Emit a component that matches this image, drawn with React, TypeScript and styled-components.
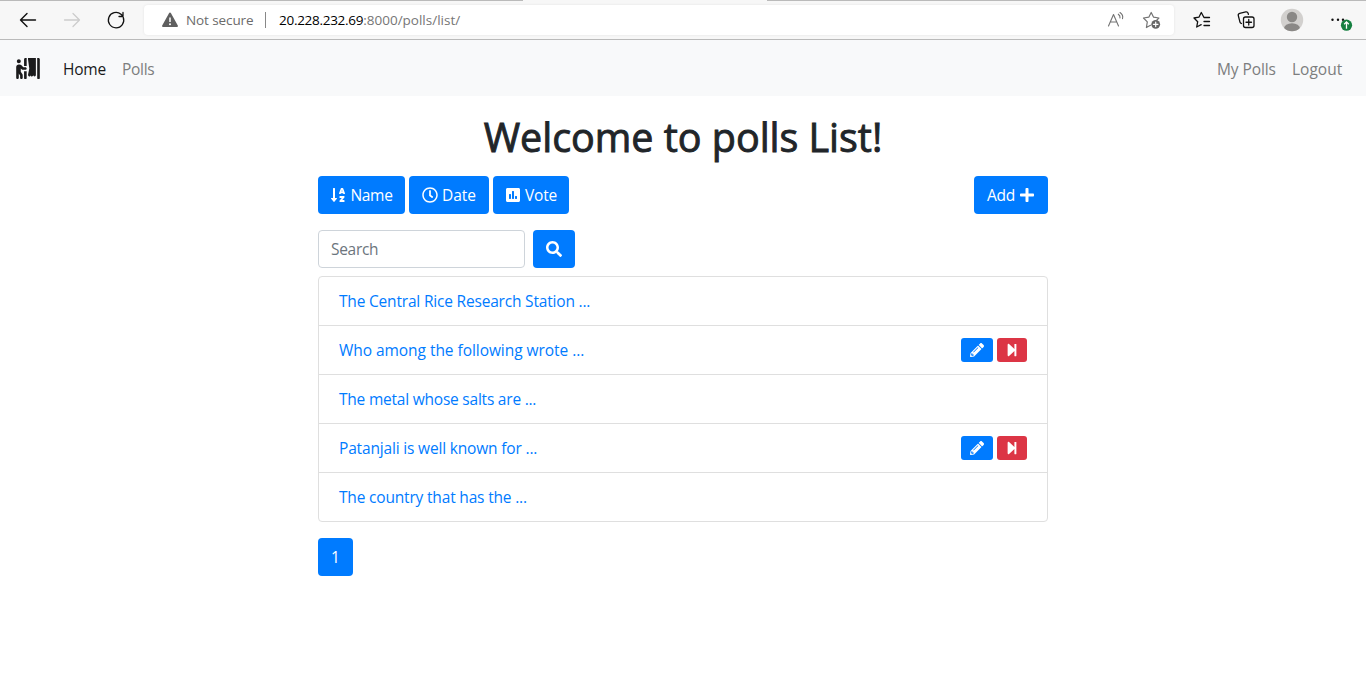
import React from "react";
import styled, { createGlobalStyle } from "styled-components";
import {
  FaPersonBooth,
  FaSortAlphaDown,
  FaRegClock,
  FaPoll,
  FaPlus,
  FaSearch,
  FaPencilAlt,
  FaStepForward,
} from "react-icons/fa";

const Global = createGlobalStyle`
  *, *::before, *::after { box-sizing: border-box; }
  body {
    margin: 0;
    background: #fff;
    color: #212529;
    font: 400 15.5px/24px "Open Sans", "Noto Sans", sans-serif;
    overflow: hidden;
  }
  svg { display: block; flex: none; }
`;

const Page = styled.div`
  display: flex;
  flex-direction: column;
  height: 690px;
`;

const BrowserBar = styled.header`
  display: flex;
  align-items: center;
  height: 40px;
  padding-top: 1px;
  background:
    linear-gradient(to right, #bababa 523px, transparent 523px, transparent 767px, #bababa 767px) top / 100% 1px no-repeat,
    #f7f7f7;
  border-bottom: 1px solid #bababa;
`;

const NavIcons = styled.div`
  display: flex;
  gap: 20px;
  width: 144px;
  padding-left: 16px;
`;

const AddressBar = styled.div`
  display: flex;
  align-items: center;
  width: 1030px;
  height: 30px;
  padding: 0 10px 0 18px;
  background: #fff;
  border-radius: 4px;
  box-shadow: 0 0 3px rgba(0, 0, 0, 0.08);
  font-size: 13.5px;
  line-height: 20px;
  color: #6b6b6b;
`;

const Security = styled.span`
  width: 79px;
  margin-left: 8px;
  letter-spacing: -0.1px;
  white-space: nowrap;
  flex: none;
`;

const Divider = styled.span`
  width: 1px;
  height: 16px;
  background: #888;
`;

const Url = styled.span`
  flex: 1;
  margin-left: 13px;
  color: #767676;
  white-space: nowrap;
`;

const Host = styled.b`
  font-weight: 400;
  letter-spacing: -0.28px;
  color: #000;
`;

const AddressActions = styled.div`
  display: flex;
  gap: 12px;
`;

const BrowserActions = styled.div`
  display: flex;
  align-items: center;
  gap: 21px;
  padding-left: 16px;
`;

const Navbar = styled.nav`
  display: flex;
  align-items: center;
  height: 56px;
  padding: 1px 24px 0 16px;
  background: #f8f9fa;
  color: #1b1b1c;
`;

const Brand = styled.a`
  margin-right: 23px;
  & svg {
    width: 24px;
    height: 21px;
  }
`;

const NavLink = styled.a<{ $active?: boolean; $width: number; $spacing?: number }>`
  width: ${(p) => p.$width}px;
  margin-right: 16px;
  color: ${(p) => (p.$active ? "#191a1a" : "#7d7e7e")};
  letter-spacing: ${(p) => p.$spacing ?? 0}px;
  white-space: nowrap;
  &:last-child { margin-right: 0; }
`;

const Spacer = styled.div`
  flex: 1;
`;

const Container = styled.main`
  width: 730px;
  margin: 17px auto 0;
`;

const Title = styled.h1`
  margin: 0 0 15px;
  font-size: 39.5px;
  font-weight: 400;
  line-height: 48px;
  letter-spacing: -0.03px;
  -webkit-text-stroke: 0.9px #212529;
  text-align: center;
  white-space: nowrap;
`;

const Toolbar = styled.div`
  display: flex;
  gap: 4px;
  margin-bottom: 16px;
`;

const Button = styled.button<{ $width: number; $spacing?: number }>`
  display: flex;
  align-items: center;
  justify-content: center;
  gap: 4px;
  width: ${(p) => p.$width}px;
  height: 38px;
  padding: 0;
  border: 0;
  border-radius: 4px;
  background: #007bff;
  color: #fff;
  font: inherit;
  letter-spacing: ${(p) => p.$spacing ?? 0}px;
  white-space: nowrap;
`;

const SearchRow = styled.form`
  display: flex;
  gap: 8px;
  margin-bottom: 8px;
`;

const SearchInput = styled.input`
  width: 207px;
  height: 38px;
  padding: 0 12px;
  border: 1px solid #ced4da;
  border-radius: 4px;
  font: inherit;
  letter-spacing: -0.3px;
  &::placeholder { color: #6c757d; opacity: 1; }
`;

const PollList = styled.ul`
  margin: 0 0 16px;
  padding: 0;
  list-style: none;
  border: 1px solid #dfdfdf;
  border-radius: 4px;
`;

const PollRow = styled.li`
  display: flex;
  align-items: center;
  gap: 4px;
  height: 49px;
  padding: 0 20px;
  &:not(:last-child) { border-bottom: 1px solid #dfdfdf; }
  &:last-child { height: 48px; }
`;

const PollLink = styled.a<{ $spacing: number }>`
  flex: 1;
  color: #007bff;
  letter-spacing: ${(p) => p.$spacing}px;
`;

const SmallButton = styled.button<{ $danger?: boolean }>`
  display: flex;
  align-items: center;
  justify-content: center;
  width: ${(p) => (p.$danger ? 30 : 32)}px;
  height: 24px;
  padding: 0;
  border: 0;
  border-radius: 3px;
  background: ${(p) => (p.$danger ? "#dc3545" : "#007bff")};
  color: #fff;
  font-size: 14px;
`;

const polls = [
  { text: "The Central Rice Research Station ...", spacing: -0.19 },
  { text: "Who among the following wrote ...", spacing: -0.05, own: true },
  { text: "The metal whose salts are ...", spacing: -0.22 },
  { text: "Patanjali is well known for ...", spacing: -0.17, own: true },
  { text: "The country that has the ...", spacing: -0.18 },
];

const line = { fill: "none", stroke: "currentColor", strokeLinecap: "round", strokeLinejoin: "round" } as const;

const BackIcon = () => (
  <svg width="24" height="24" viewBox="0 0 24 24" {...line} stroke="#111" strokeWidth="1.4">
    <path d="M19.5 12H4.5M11 5.5L4.5 12l6.5 6.5" />
  </svg>
);

const ForwardIcon = () => (
  <svg width="24" height="24" viewBox="0 0 24 24" {...line} stroke="#cdcdcd" strokeWidth="1.3">
    <path d="M4.5 12h15M13 5.5l6.5 6.5-6.5 6.5" />
  </svg>
);

const ReloadIcon = () => (
  <svg width="24" height="24" viewBox="0 0 24 24" {...line} stroke="#111" strokeWidth="1.3">
    <path d="M19.3 9.5A7.7 7.700 0 1 1 17 6.200L19 8.300M19 4.500v4h-4" />
  </svg>
);

const WarningIcon = () => (
  <svg width="16" height="16" viewBox="0 0 16 16">
    <path d="M7 1.2a1.15 1.15 0 0 1 2 0l6.8 12.2a1.1 1.1 0 0 1-1 1.6H1.2a1.1 1.1 0 0 1-1-1.6z" fill="#5f5f5f" />
    <path d="M8 5.5v4.5" stroke="#fff" strokeWidth="1.5" />
    <circle cx="8" cy="12.2" r="1" fill="#fff" />
  </svg>
);

const ReadAloudIcon = () => (
  <svg width="24" height="24" viewBox="0 0 24 24" {...line} stroke="#737373" strokeWidth="1.1">
    <path d="M4.500 18L9.500 6.500l5 11.500M6.300 14h6.500M14.300 6.200c1.500 1 1.900 2.300 1.700 3.800M16 4.500c2.300 1.600 3.200 3.800 2.500 6.200" />
  </svg>
);

const AddFavoriteIcon = () => (
  <svg width="24" height="24" viewBox="0 0 24 24" {...line} stroke="#737373" strokeWidth="1.2">
    <path d="M10.500 17.300L6.400 19.500l.9-5.600L3.500 10l5.300-.8L11.200 4.500l2.400 4.700 5.300.8-2 2" />
    <circle cx="15.700" cy="16.300" r="4.400" fill="#666" stroke="none" />
    <path d="M15.700 14v4.600M13.400 16.300H18" stroke="#fff" />
  </svg>
);

const FavoritesIcon = () => (
  <svg width="24" height="24" viewBox="0 0 24 24" {...line} stroke="#111" strokeWidth="1.3">
    <path d="M19.500 9.500H14L11.300 4.500 8.900 9.200 4 10l3.700 3.700-1 5.300L11.200 16.700M14 13.500h5.500M14 17.500h5.500" />
  </svg>
);

const CollectionsIcon = () => (
  <svg width="24" height="24" viewBox="0 0 24 24" {...line} stroke="#111" strokeWidth="1.3">
    <rect x="8.500" y="9" width="10.500" height="10.500" rx="2" />
    <path d="M13.750 11.500v5.500M11 14.250h5.500M6.500 15.500l-.7-.4a2 2 0 0 1-.9-1.300L3.300 7.700a2 2 0 0 1 1.400-2.400l6.100-1.400a2 2 0 0 1 2.300 1.300l.3 1.200" />
  </svg>
);

const ProfileIcon = () => (
  <svg width="24" height="24" viewBox="0 0 24 24">
    <defs>
      <clipPath id="avatar">
        <circle cx="12" cy="12" r="11.200" />
      </clipPath>
    </defs>
    <g clipPath="url(#avatar)">
      <rect width="24" height="24" fill="#d2d0ce" />
      <circle cx="12" cy="9" r="5.200" fill="#8a8886" />
      <ellipse cx="12" cy="20.500" rx="8" ry="5.300" fill="#8a8886" />
    </g>
  </svg>
);

const MenuIcon = () => (
  <svg width="28" height="24" viewBox="0 0 28 24">
    <g fill="#111">
      <circle cx="7.500" cy="11.700" r="1.200" />
      <circle cx="13" cy="11.700" r="1.200" />
      <circle cx="18" cy="11.700" r="1.200" />
    </g>
    <circle cx="21.500" cy="17.200" r="5.600" fill="#158040" />
    <path d="M21.500 20.700v-6.500M19.200 16.200l2.300-2.300 2.300 2.300" fill="none" stroke="#fff" strokeWidth="1.300" />
  </svg>
);

export default function App() {
  return (
    <Page>
      <Global />
      <BrowserBar>
        <NavIcons>
          <BackIcon />
          <ForwardIcon />
          <ReloadIcon />
        </NavIcons>
        <AddressBar>
          <WarningIcon />
          <Security>Not secure</Security>
          <Divider />
          <Url>
            <Host>20.228.232.69</Host>:8000/polls/list/
          </Url>
          <AddressActions>
            <ReadAloudIcon />
            <AddFavoriteIcon />
          </AddressActions>
        </AddressBar>
        <BrowserActions>
          <FavoritesIcon />
          <CollectionsIcon />
          <ProfileIcon />
          <MenuIcon />
        </BrowserActions>
      </BrowserBar>
      <Navbar>
        <Brand>
          <FaPersonBooth />
        </Brand>
        <NavLink $active $width={43} $spacing={-0.2}>Home</NavLink>
        <NavLink $width={32} $spacing={-0.3}>Polls</NavLink>
        <Spacer />
        <NavLink $width={59} $spacing={-0.1}>My Polls</NavLink>
        <NavLink $width={50}>Logout</NavLink>
      </Navbar>
      <Container>
        <Title>Welcome to polls List!</Title>
        <Toolbar>
          <Button $width={87} $spacing={-0.3}>
            <FaSortAlphaDown size={16} />
            Name
          </Button>
          <Button $width={80}>
            <FaRegClock size={16} />
            Date
          </Button>
          <Button $width={76} $spacing={-0.2}>
            <FaPoll size={16} />
            Vote
          </Button>
          <Spacer />
          <Button $width={74} $spacing={-0.3}>
            Add
            <FaPlus size={16} />
          </Button>
        </Toolbar>
        <SearchRow>
          <SearchInput placeholder="Search" />
          <Button type="button" $width={42}>
            <FaSearch size={16} />
          </Button>
        </SearchRow>
        <PollList>
          {polls.map((poll) => (
            <PollRow key={poll.text}>
              <PollLink $spacing={poll.spacing}>{poll.text}</PollLink>
              {poll.own && (
                <>
                  <SmallButton>
                    <FaPencilAlt />
                  </SmallButton>
                  <SmallButton $danger>
                    <FaStepForward />
                  </SmallButton>
                </>
              )}
            </PollRow>
          ))}
        </PollList>
        <Button $width={35}>1</Button>
      </Container>
    </Page>
  );
}
